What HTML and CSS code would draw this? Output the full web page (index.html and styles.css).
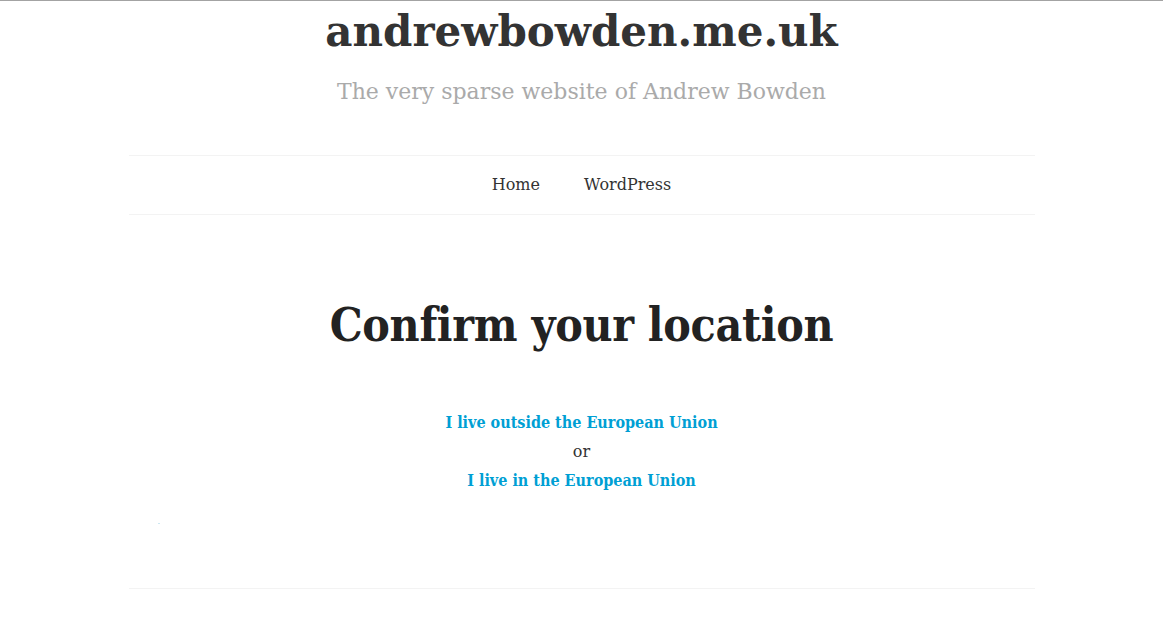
FILE: index.html
```html
<!DOCTYPE html>
<html>
<head>
<meta charset="utf-8">
<title>andrewbowden.me.uk</title>
<link rel="stylesheet" href="styles.css">
</head>
<body>
<div class="page">
  <header class="site-header">
    <h1 class="site-title">andrewbowden.me.uk</h1>
    <p class="site-tagline">The very sparse website of Andrew Bowden</p>
  </header>
  <nav class="site-nav">
    <a href="#">Home</a>
    <a href="#">WordPress</a>
  </nav>
  <main class="content">
    <h2 class="entry-title">Confirm your location</h2>
    <div class="choices">
      <a href="#" class="choice">I live outside the European Union</a>
      <span class="or">or</span>
      <a href="#" class="choice">I live in the European Union</a>
    </div>
    <div class="dot"></div>
  </main>
  <footer class="site-footer"></footer>
</div>
</body>
</html>
```
FILE: styles.css
```css
html, body {
  margin: 0;
  padding: 0;
  background: #fff;
}
body {
  border-top: 1px solid #a3a3a3;
  font-family: "DejaVu Serif", serif;
  color: #333;
}
.page {
  width: 906px;
  margin: 0 auto;
}
.site-header {
  text-align: center;
  padding-top: 4px;
  height: 150px;
  box-sizing: border-box;
}
.site-title {
  margin: 0;
  font-family: "DejaVu Serif", serif;
  font-size: 42px;
  font-weight: bold;
  line-height: 54px;
  color: #333;
}
.site-tagline {
  margin: 3px 0 0;
  font-size: 22px;
  line-height: 60px;
  color: #aaa;
}
.site-nav {
  display: flex;
  justify-content: center;
  gap: 44px;
  border-top: 1px solid #f3f3f3;
  border-bottom: 1px solid #f3f3f3;
  height: 58px;
  align-items: center;
  margin-top: 4px;
}
.site-nav a {
  font-family: "DejaVu Serif", serif;
  font-size: 16px;
  line-height: 20px;
  color: #333;
  text-decoration: none;
}
.content {
  text-align: center;
  padding-top: 80px;
  height: 373px;
  box-sizing: border-box;
  position: relative;
}
.entry-title {
  margin: 0;
  font-family: "DejaVu Serif Condensed", "DejaVu Serif", serif;
  font-weight: bold;
  font-size: 46px;
  letter-spacing: -0.3px;
  line-height: 60px;
  color: #222;
}
.choices {
  margin-top: 53px;
  display: flex;
  flex-direction: column;
  align-items: center;
  font-size: 16px;
  line-height: 29px;
}
.choice {
  color: #009fd4;
  font-family: "DejaVu Serif Condensed", "DejaVu Serif", serif;
  font-weight: bold;
  text-decoration: none;
}
.or {
  color: #333;
}
.dot {
  position: absolute;
  left: 29px;
  top: 308px;
  width: 2px;
  height: 1px;
  background: #cde8f2;
}
.site-footer {
  border-top: 1px solid #f3f3f3;
  height: 53px;
}
```
